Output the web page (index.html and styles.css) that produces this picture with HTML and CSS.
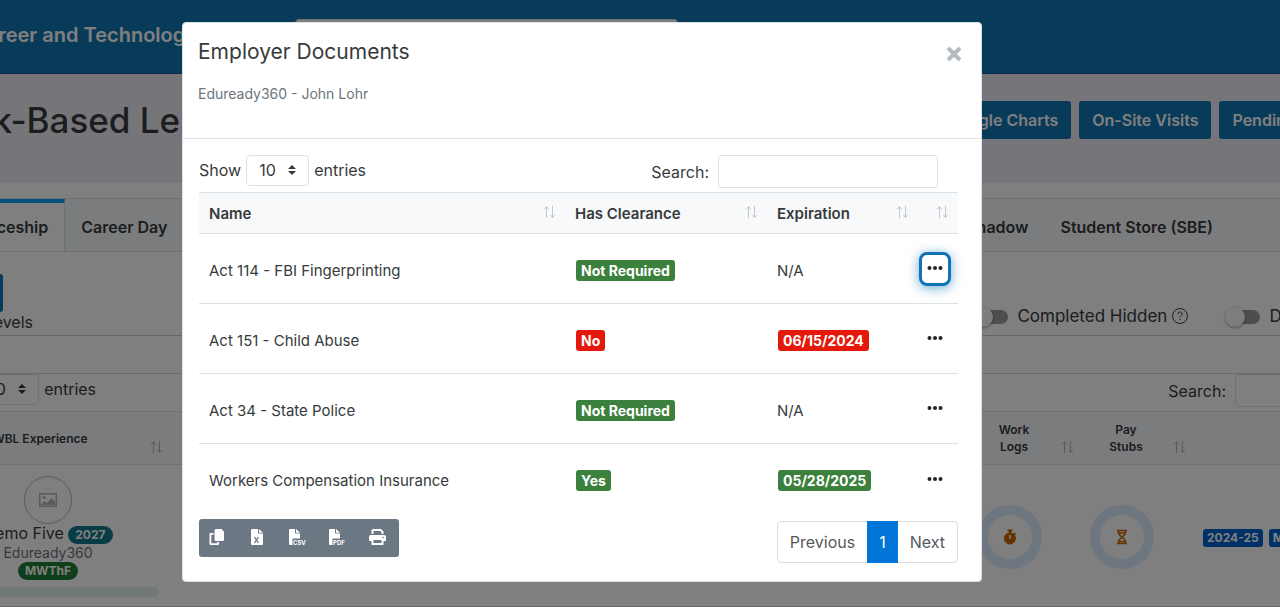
FILE: index.html
```html
<!DOCTYPE html>
<html lang="en">
<head>
    <meta charset="utf-8">
    <meta name="viewport" content="width=device-width, initial-scale=1.0">
    <title>Work-Based Learning</title>
    <link rel="stylesheet" href="styles.css">
</head>
<body>
    <!-- shared icons -->
    <svg class="sprite" aria-hidden="true">
        <symbol id="sort" viewBox="0 0 14 14">
            <path d="M4.500 13V2M2 4.500L4.500 1.500L7 4.500M10.500 1V12M8.500 10L10.500 12.500L13 10" fill="none" stroke="currentColor"/>
        </symbol>
        <symbol id="dots" viewBox="0 0 16 16">
            <circle cx="2.500" cy="8" r="2"/><circle cx="8" cy="8" r="2"/><circle cx="13.500" cy="8" r="2"/>
        </symbol>
    </svg>

    <div class="page">
        <header class="topbar">
            <span class="brand">Career and Technology</span>
            <input class="top-search" type="text" aria-label="Search site">
        </header>

        <div class="title-band">
            <h1>Work-Based Learning</h1>
            <div class="actions">
                <button class="btn">Google Charts</button>
                <button class="btn">On-Site Visits</button>
                <button class="btn">Pending Visits</button>
            </div>
        </div>

        <nav class="tabs">
            <a class="tab active" href="#">Apprenticeship</a>
            <a class="tab" href="#">Career Day</a>
            <a class="tab push" href="#">Job Shadow</a>
            <a class="tab" href="#">Student Store (SBE)</a>
        </nav>

        <main>
            <div class="filters">
                <div class="levels">
                    <button class="btn" aria-label="Filter"></button>
                    <span>Career Levels</span>
                </div>
                <div class="switches">
                    <label><input type="checkbox" class="switch">Completed Hidden
                        <svg class="help" viewBox="0 0 16 16"><circle cx="8" cy="8" r="7.500" fill="none" stroke="currentColor"/><path d="M5.800 6.200C5.800 3.200 10.200 3.300 10.200 6C10.200 7.500 8 7.700 8 9.500" fill="none" stroke="currentColor"/><circle cx="8" cy="11.500" r=".7"/></svg>
                    </label>
                    <label><input type="checkbox" class="switch">Drafts Hidden</label>
                </div>
            </div>

            <div class="controls">
                <label>Show <select><option>10</option><option>25</option></select> entries</label>
                <label class="search">Search: <input type="search"></label>
            </div>

            <table class="wbl">
                <colgroup><col class="c-student"><col><col class="c-ring"><col class="c-ring"><col class="c-tags"></colgroup>
                <thead>
                    <tr>
                        <th>WBL Experience<svg class="sort"><use href="#sort"/></svg></th>
                        <th></th>
                        <th>Work<br>Logs<svg class="sort"><use href="#sort"/></svg></th>
                        <th>Pay<br>Stubs<svg class="sort"><use href="#sort"/></svg></th>
                        <th></th>
                    </tr>
                </thead>
                <tbody>
                    <tr>
                        <td>
                            <div class="student">
                                <span class="avatar">
                                    <svg width="18" height="14" viewBox="0 0 18 14"><path d="M0 0H18V14H0Z M1.500 1.500V12.500H16.500V1.500Z" fill-rule="evenodd"/><circle cx="5" cy="4.500" r="1.500"/><path d="M2 12L5.500 8L8 10L12.500 5L16 9V12Z"/></svg>
                                </span>
                                <div class="who">Demo Five <span class="pill teal">2027</span></div>
                                <div class="org">Eduready360</div>
                                <span class="pill green">MWThF</span>
                            </div>
                            <div class="progress"></div>
                        </td>
                        <td></td>
                        <td><span class="ring"><svg width="16" height="16" viewBox="0 0 16 16"><path d="M5.500 .5H10.500V2.500H9V3.500A5.500 5.500 0 0 1 11.500 4.700L12.600 3.600L14 5L12.900 6.100A6 6 0 1 1 7 3.500V2.500H5.500Z M7.200 6V10H8.800V6Z" fill-rule="evenodd"/></svg></span></td>
                        <td><span class="ring"><svg width="16" height="16" viewBox="0 0 16 16"><path d="M3 1.500H13M3 14.500H13M4.500 1.500V4C4.500 6 11.500 10 11.500 12.500V14.500M11.500 1.500V4C11.500 6 4.500 10 4.500 12.500V14.500M5 4H11M5 12.500H11" fill="none" stroke="currentColor" stroke-width="1.500"/></svg></span></td>
                        <td><div class="tags"><span class="tag">2024-25</span><span class="tag">MP1</span></div></td>
                    </tr>
                </tbody>
            </table>
        </main>
    </div>

    <div class="backdrop">
        <div class="modal" role="dialog" aria-labelledby="modalTitle">
            <div class="modal-header">
                <div>
                    <h2 id="modalTitle">Employer Documents</h2>
                    <p>Eduready360 - John Lohr</p>
                </div>
                <button class="close" aria-label="Close"><svg width="16" height="16" viewBox="0 0 16 16"><path d="M2 2L14 14M14 2L2 14" stroke="currentColor" stroke-width="4"/></svg></button>
            </div>
            <div class="modal-body">
                <div class="controls">
                    <label>Show <select><option>10</option><option>25</option></select> entries</label>
                    <label class="search">Search: <input type="search"></label>
                </div>

                <table class="docs">
                    <colgroup><col><col class="c-clear"><col class="c-exp"><col class="c-menu"></colgroup>
                    <thead>
                        <tr>
                            <th>Name<svg class="sort"><use href="#sort"/></svg></th>
                            <th>Has Clearance<svg class="sort"><use href="#sort"/></svg></th>
                            <th>Expiration<svg class="sort"><use href="#sort"/></svg></th>
                            <th><svg class="sort"><use href="#sort"/></svg></th>
                        </tr>
                    </thead>
                    <tbody>
                        <tr>
                            <td>Act 114 - FBI Fingerprinting</td>
                            <td><span class="badge ok">Not Required</span></td>
                            <td>N/A</td>
                            <td><button class="menu focused" aria-label="Actions"><svg><use href="#dots"/></svg></button></td>
                        </tr>
                        <tr>
                            <td>Act 151 - Child Abuse</td>
                            <td><span class="badge bad">No</span></td>
                            <td><span class="badge bad">06/15/2024</span></td>
                            <td><button class="menu" aria-label="Actions"><svg><use href="#dots"/></svg></button></td>
                        </tr>
                        <tr>
                            <td>Act 34 - State Police</td>
                            <td><span class="badge ok">Not Required</span></td>
                            <td>N/A</td>
                            <td><button class="menu" aria-label="Actions"><svg><use href="#dots"/></svg></button></td>
                        </tr>
                        <tr>
                            <td>Workers Compensation Insurance</td>
                            <td><span class="badge ok">Yes</span></td>
                            <td><span class="badge ok">05/28/2025</span></td>
                            <td><button class="menu" aria-label="Actions"><svg><use href="#dots"/></svg></button></td>
                        </tr>
                    </tbody>
                </table>

                <div class="table-footer">
                    <div class="exports">
                        <button aria-label="Copy"><svg width="16" height="16" viewBox="0 0 16 16"><path d="M7 0H12.500L15 2.500V10.500Q15 12 13.500 12H7Q5.500 12 5.500 10.500V1.500Q5.500 0 7 0Z"/><path d="M4.500 4H1.500Q.5 4 .5 5V15Q.5 16 1.500 16H9Q10 16 10 15V13H8.200V14.200H2.300V5.800H4.500Z"/></svg></button>
                        <button aria-label="Excel"><svg width="16" height="16" viewBox="0 0 16 16"><path d="M3 0H9V4.500H14V15Q14 16 13 16H3Q2 16 2 15V1Q2 0 3 0Z M10 0L14 3.700H10Z"/><path d="M5.500 8L9.500 14M9.500 8L5.500 14" stroke="#6b7883" stroke-width="1.300"/></svg></button>
                        <button aria-label="CSV"><svg width="18" height="16" viewBox="0 0 18 16"><path d="M2 0H7V4.500H12V9.500H4.500V16H2Q1 16 1 15V1Q1 0 2 0Z M8 0L12 3.700H8Z"/><text x="5" y="16">CSV</text></svg></button>
                        <button aria-label="PDF"><svg width="18" height="16" viewBox="0 0 18 16"><path d="M2 0H7V4.500H12V9.500H4.500V16H2Q1 16 1 15V1Q1 0 2 0Z M8 0L12 3.700H8Z"/><text x="5" y="16">PDF</text></svg></button>
                        <button aria-label="Print"><svg width="17" height="16" viewBox="0 0 17 16"><path d="M2.500 5V1.500Q2.500 0 4 0H12L14.500 2.500V5H12.500V3.200L11.300 2H4.500V5Z"/><path d="M2 6H15Q17 6 17 8V12H14.500V16H2.500V12H0V8Q0 6 2 6Z M4.500 11V14H12.500V11Z" fill-rule="evenodd"/><circle cx="14.200" cy="8.500" r=".8" fill="#6b7883"/></svg></button>
                    </div>
                    <div class="pagination">
                        <a href="#">Previous</a><a class="current" href="#">1</a><a href="#">Next</a>
                    </div>
                </div>
            </div>
        </div>
    </div>
</body>
</html>
```
FILE: styles.css
```css
* {
    box-sizing: border-box;
}
body {
    margin: 0;
    font-family: Inter, sans-serif;
    font-size: 16px;
    line-height: 24px;
    color: #373a3c;
    overflow: hidden;
    height: 100vh;
}
button, input, select {
    font-family: inherit;
    font-size: inherit;
    color: inherit;
}
a {
    color: inherit;
    text-decoration: none;
}
svg {
    fill: currentColor;
}
.sprite {
    position: absolute;
    width: 0;
    height: 0;
}

/* page is wider than the window and panned to the right */
.page {
    margin-left: -100px;
    width: calc(100% + 200px);
}
.topbar {
    display: flex;
    height: 74px;
    padding: 19px 36px 0 72px;
    background: #1074b4;
    border-bottom: 1px solid #1a4f90;
}
.brand {
    width: 323px;
    padding-top: 4px;
    font-size: 20px;
    font-weight: 600;
    color: #fff;
}
.top-search {
    width: 383px;
    height: 36px;
    border: 1px solid #d8e2e7;
    border-radius: 4px;
}
.title-band {
    display: flex;
    justify-content: space-between;
    align-items: flex-start;
    padding: 27px 24px 43px 24px;
    height: 108px;
    background: #ececf5;
    border-bottom: 1px solid #d6dbe4;
}
.title-band h1 {
    margin: 0;
    font-size: 35px;
    line-height: 38px;
    font-weight: 500;
}
.actions {
    display: flex;
    gap: 8px;
}
.btn {
    height: 38px;
    padding: 0 13px;
    border: 0;
    border-radius: 3px;
    background: #1074b4;
    color: #fff;
    font-weight: 600;
}
.tabs {
    display: flex;
    margin-top: 16px;
    padding: 0 151px 0 14px;
    background: #f7f9fb;
    border-top: 1px solid #d8e2e7;
    border-bottom: 1px solid #d8e2e7;
}
.tab {
    padding: 16px 16px 12px;
    font-weight: 600;
}
.tab.active {
    padding-top: 12px;
    background: #fff;
    border-top: 4px solid #00a0f0;
    border-right: 1px solid #d8e2e7;
}
.tab.push {
    margin-left: auto;
}
main {
    padding-left: 29px;
}
.filters {
    display: flex;
    justify-content: space-between;
    align-items: flex-start;
    height: 84px;
    padding-top: 22px;
    border-bottom: 1px solid #c8ced2;
}
.levels {
    display: flex;
    flex-direction: column;
}
.levels .btn {
    width: 74px;
}
.levels span {
    line-height: 20px;
}
.switches {
    display: flex;
    gap: 40px;
    padding: 30px 0 0;
    font-size: 17px;
}
.switches label {
    display: flex;
    align-items: center;
    white-space: nowrap;
}
.switch {
    appearance: none;
    position: relative;
    width: 32px;
    height: 14px;
    margin: 2px 9px 0 0;
    border-radius: 7px;
    background: #9c9c9c;
}
.switch::before {
    content: "";
    position: absolute;
    left: -3px;
    top: -3px;
    width: 20px;
    height: 20px;
    border-radius: 50%;
    background: #fafafa;
    box-shadow: 0 1px 3px rgba(0, 0, 0, 0.4);
}
.help {
    width: 16px;
    height: 16px;
    margin-left: 5px;
}
.controls {
    display: flex;
    justify-content: space-between;
    height: 37px;
}
.controls label {
    display: flex;
    align-items: center;
    gap: 5px;
    height: 30px;
}
.controls .search {
    gap: 9px;
    height: 33px;
    margin-right: 20px;
}
.controls select {
    appearance: none;
    width: 63px;
    height: 31px;
    padding: 0 12px;
    border: 1px solid #d8e2e7;
    border-radius: 4px;
    /* up and down carets */
    background: #fff url("data:image/svg+xml,%3Csvg xmlns='http://www.w3.org/2000/svg' viewBox='0 0 8 10'%3E%3Cpath fill='%23343a40' d='M4 0L8 4H0Z M4 10L0 6H8Z'/%3E%3C/svg%3E") right 12px center / 8px 10px no-repeat;
}
.controls input {
    width: 220px;
    height: 33px;
    border: 1px solid #d8e2e7;
    border-radius: 3px;
    background: #fff;
}
main > .controls {
    margin-top: 37px;
    border-top: 1px solid #d0d4d8;
    height: 38px;
    padding-right: 7px;
}
main > .controls .search {
    margin-right: 0;
}
main > .controls input {
    width: 138px;
}

table {
    width: 100%;
    border-collapse: separate;
    border-spacing: 0;
    table-layout: fixed;
}
th {
    position: relative;
    background: #f7f9fb;
    border-top: 1px solid #d8e2e7;
    border-bottom: 1px solid #d8e2e7;
    font-weight: 600;
    text-align: left;
}
.sort {
    position: absolute;
    right: 9px;
    bottom: 14px;
    width: 14px;
    height: 14px;
    color: #c4c7ca;
}
.c-student {
    width: 238px;
}
.c-ring {
    width: 112px;
}
.c-tags {
    width: 190px;
}
.wbl th {
    height: 54px;
    padding: 0 30px 0 14px;
    font-size: 12px;
    line-height: 17px;
    text-align: center;
}
.wbl th .sort {
    right: 4px;
    bottom: 10px;
    color: #b4b7ba;
}
.wbl td {
    height: 142px;
    padding: 0 8px;
    border-bottom: 1px solid #c8ced2;
}
.student {
    display: flex;
    flex-direction: column;
    align-items: center;
    height: 113px;
    padding-top: 2px;
    line-height: 18px;
}
.avatar {
    display: flex;
    align-items: center;
    justify-content: center;
    width: 48px;
    height: 48px;
    border: 1px solid #b4b7ba;
    border-radius: 50%;
    color: #b4b7ba;
}
.who {
    white-space: nowrap;
}
.org {
    font-size: 14px;
    color: #6c757d;
}
.pill {
    padding: 0 7px;
    border-radius: 9px;
    color: #fff;
    font-size: 12px;
    line-height: 18px;
    font-weight: 700;
}
.who .pill {
    display: inline-block;
}
.teal {
    background: #117a8b;
}
.green {
    background: #1e7e34;
}
.progress {
    height: 10px;
    border-radius: 5px;
    background: #e4eef0;
}
.ring {
    display: flex;
    align-items: center;
    justify-content: center;
    width: 64px;
    height: 64px;
    margin: 2px 0 0 4px;
    border: 10px solid #dceeff;
    border-radius: 50%;
    color: #c86400;
}
.tags {
    display: flex;
    gap: 6px;
    padding: 4px 0 0 5px;
}
.tag {
    padding: 0 4px;
    border-radius: 3px;
    background: #0062cc;
    color: #fff;
    font-size: 12px;
    line-height: 18px;
    font-weight: 700;
}

.backdrop {
    position: fixed;
    inset: 0;
    display: flex;
    justify-content: center;
    align-items: flex-start;
    padding: 22px 116px 0 0;
    background: rgba(0, 0, 0, 0.5);
}
.modal {
    width: 800px;
    max-width: 100%;
    border: 1px solid #d8e2e7;
    border-radius: 4px;
    background: #fff;
}
.modal-header {
    display: flex;
    justify-content: space-between;
    align-items: flex-start;
    padding: 16px 16px 33px 15px;
    border-bottom: 1px solid #d8e2e7;
}
.modal-header h2 {
    margin: 0 0 18px;
    font-size: 21px;
    line-height: 26px;
    font-weight: 400;
}
.modal-header p {
    margin: 0;
    font-size: 14px;
    line-height: 22px;
    color: #6c757d;
}
.close {
    display: flex;
    padding: 7px 3px;
    border: 0;
    background: none;
    color: #b4bcc2;
}
.modal-body {
    padding: 16px 23px 18px 16px;
}
.c-clear {
    width: 202px;
}
.c-exp {
    width: 151px;
}
.c-menu {
    width: 40px;
}
.docs {
    font-size: 15px;
}
.docs th {
    height: 42px;
    padding: 2px 10px 0;
}
.docs td {
    height: 70px;
    padding: 4px 10px 0;
    border-bottom: 1px solid #d8e2e7;
}
.docs td:last-child {
    padding: 0 1px;
}
.docs tr:last-child td {
    border-bottom: 0;
}
.badge {
    display: inline-block;
    margin-left: 1px;
    padding: 0 5px;
    border-radius: 3px;
    color: #fff;
    font-size: 14px;
    line-height: 21px;
    font-weight: 700;
}
.ok {
    background: #3b803d;
}
.bad {
    background: #e5190b;
}
.menu {
    display: flex;
    align-items: center;
    justify-content: center;
    width: 32px;
    height: 34px;
    padding: 0 0 1px;
    border: 3px solid transparent;
    border-radius: 8px;
    background: #fff;
    color: #212529;
}
.menu svg {
    width: 16px;
    height: 16px;
}
.menu.focused {
    border-color: #1074b4;
    box-shadow: 0 2px 12px rgba(16, 116, 180, 0.6);
}
.table-footer {
    display: flex;
    justify-content: space-between;
    align-items: flex-start;
    margin-top: 5px;
}
.exports {
    display: flex;
    border-radius: 3px;
    background: #6b7883;
}
.exports button {
    display: flex;
    justify-content: center;
    width: 40px;
    height: 38px;
    padding: 10px 4px 0 0;
    border: 0;
    background: none;
    color: #fff;
}
.exports text {
    font-size: 6px;
    font-weight: 700;
}
.pagination {
    display: flex;
    margin-top: 2px;
    border: 1px solid #dddddd;
    border-radius: 4px;
}
.pagination a {
    padding: 8px 12px;
    color: #55595c;
}
.pagination .current {
    margin: -1px 0;
    padding: 9px 12px;
    background: #0275d8;
    color: #fff;
}
```
